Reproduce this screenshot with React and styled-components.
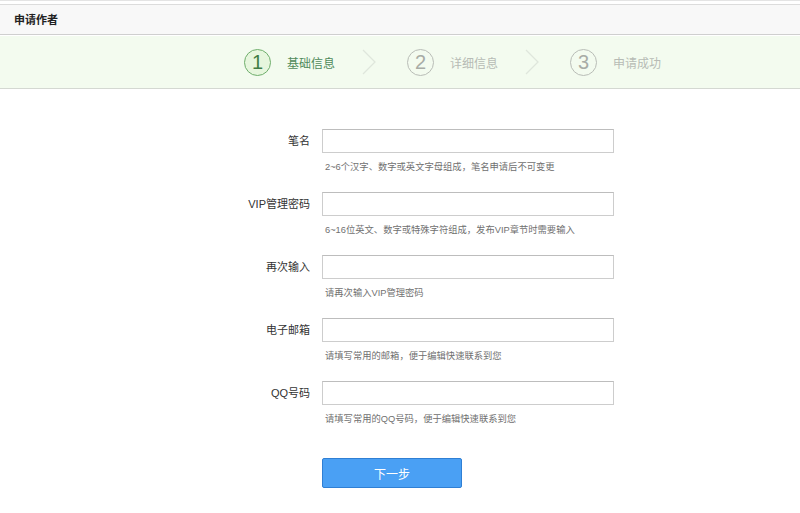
import React from "react";
import styled, { createGlobalStyle } from "styled-components";

const GlobalStyle = createGlobalStyle`
  body {
    margin: 0;
    background: #ffffff;
    font-family: "Liberation Sans", "Noto Sans CJK SC", sans-serif;
  }
`;

const steps = [
  { num: 1, text: "基础信息", active: true },
  { num: 2, text: "详细信息" },
  { num: 3, text: "申请成功" },
];

const fields = [
  { label: "笔名", hint: "2~6个汉字、数字或英文字母组成，笔名申请后不可变更" },
  { label: "VIP管理密码", hint: "6~16位英文、数字或特殊字符组成，发布VIP章节时需要输入" },
  { label: "再次输入", hint: "请再次输入VIP管理密码" },
  { label: "电子邮箱", hint: "请填写常用的邮箱，便于编辑快速联系到您" },
  { label: "QQ号码", hint: "请填写常用的QQ号码，便于编辑快速联系到您" },
];

function Chevron() {
  return (
    <svg width="14" height="26" viewBox="0 0 14 26">
      <path d="M1 1 L13 13 L1 25" fill="none" stroke="#dfe6dc" strokeWidth="1.3" />
    </svg>
  );
}

export default function App() {
  return (
    <>
      <GlobalStyle />
      <Page>
        <Header>申请作者</Header>
        <StepBar>
          {steps.map((s, i) => (
            <React.Fragment key={s.num}>
              {i > 0 && (
                <ArrowWrap>
                  <Chevron />
                </ArrowWrap>
              )}
              <Step>
                <Circle $active={s.active}>{s.num}</Circle>
                <StepText $active={s.active}>{s.text}</StepText>
              </Step>
            </React.Fragment>
          ))}
        </StepBar>
        <Form>
          {fields.map((f) => (
            <Row key={f.label}>
              <Label>{f.label}</Label>
              <Field>
                <Input type="text" />
                <Hint>{f.hint}</Hint>
              </Field>
            </Row>
          ))}
          <ButtonRow>
            <NextButton>下一步</NextButton>
          </ButtonRow>
        </Form>
      </Page>
    </>
  );
}

const Page = styled.div`
  width: 800px;
  height: 513px;
  overflow: hidden;
  padding-top: 3px;
  box-sizing: border-box;
  border-top: 1px solid #e4e4e4;
`;

const Header = styled.div`
  height: 29px;
  line-height: 31px;
  padding-left: 14px;
  background: #f8f8f8;
  border-top: 1px solid #dcdcdc;
  border-bottom: 1px solid #cfcfcf;
  font-size: 11px;
  font-weight: bold;
  color: #222;
`;

const StepBar = styled.div`
  height: 52px;
  margin-top: 1px;
  background: #f3fbef;
  border-bottom: 1px solid #d4d8d2;
  display: flex;
  align-items: center;
  padding-left: 244px;
`;

const Step = styled.div`
  display: flex;
  align-items: center;
`;

const Circle = styled.div`
  width: 27px;
  height: 27px;
  border-radius: 50%;
  box-sizing: border-box;
  border: 1px solid ${(p) => (p.$active ? "#6fae6c" : "#b9bdb7")};
  background: ${(p) => (p.$active ? "#e6f6dd" : "transparent")};
  color: ${(p) => (p.$active ? "#3f7d44" : "#a8aca6")};
  font-size: 20px;
  font-family: "Liberation Sans", sans-serif;
  display: flex;
  align-items: center;
  justify-content: center;
`;

const StepText = styled.div`
  margin-left: 16px;
  font-size: 12px;
  color: ${(p) => (p.$active ? "#4f8a5b" : "#b7bbb5")};
`;

const ArrowWrap = styled.div`
  display: flex;
  align-items: center;
  margin: 0 31px 0 27px;
`;

const Form = styled.div`
  padding-top: 40px;
`;

const Row = styled.div`
  display: flex;
  align-items: flex-start;
  height: 63px;
`;

const Label = styled.div`
  width: 322px;
  padding-right: 12px;
  box-sizing: border-box;
  text-align: right;
  font-size: 11px;
  color: #333;
  line-height: 24px;
`;

const Field = styled.div`
  display: flex;
  flex-direction: column;
`;

const Input = styled.input`
  width: 292px;
  height: 24px;
  box-sizing: border-box;
  border: 1px solid #cdcdcd;
  border-top-color: #bdbdbd;
  outline: none;
  padding: 0 6px;
`;

const Hint = styled.div`
  margin-top: 6px;
  padding-left: 3px;
  font-size: 9.3px;
  color: #707070;
`;

const ButtonRow = styled.div`
  padding-left: 322px;
  padding-top: 14px;
`;

const NextButton = styled.button`
  width: 140px;
  height: 30px;
  background: #4aa0f4;
  border: 1px solid #2f7fd4;
  border-radius: 2px;
  color: #ffffff;
  font-size: 12px;
  font-family: "Liberation Sans", "Noto Sans CJK SC", sans-serif;
  cursor: pointer;
`;
